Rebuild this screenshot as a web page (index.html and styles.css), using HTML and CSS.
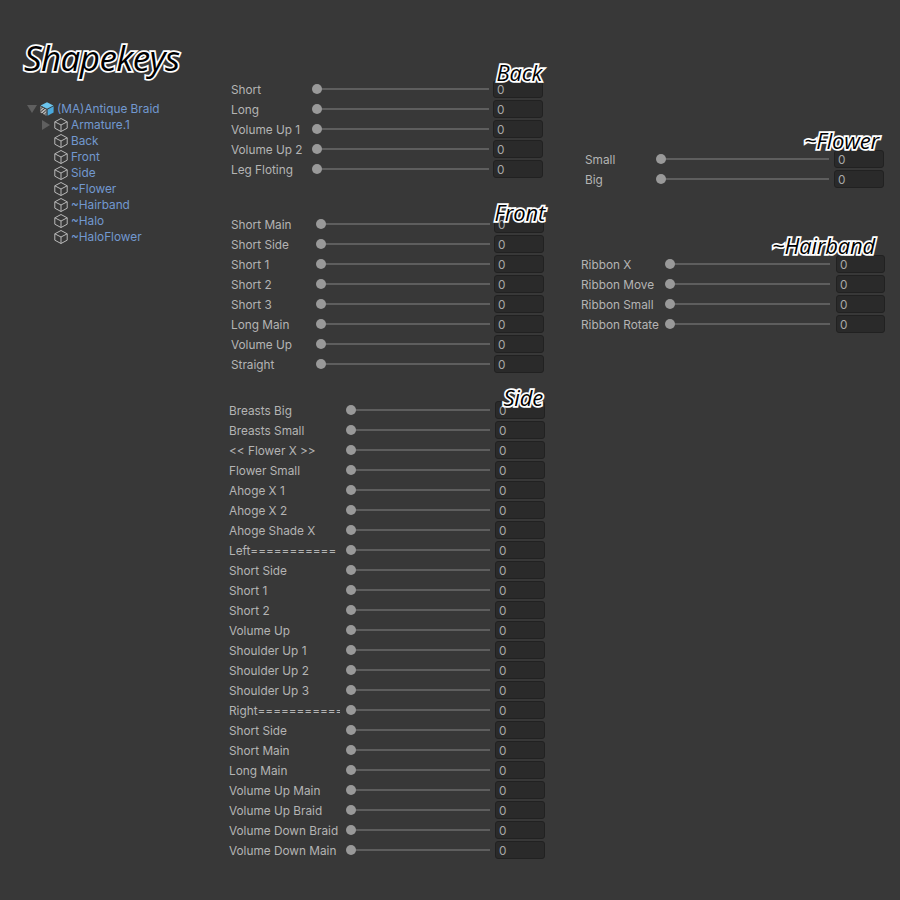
FILE: index.html
```html
<!DOCTYPE html>
<html lang="en">

<head>
    <meta charset="UTF-8">
    <title>Shapekeys</title>
    <link rel="stylesheet" href="styles.css">
</head>

<body>
<svg class="defs" width="0" height="0">
    <symbol id="cube" viewBox="0 0 16 16">
        <path d="M8 1.5 14.2 4.8V11.2L8 14.5 1.8 11.2V4.8ZM1.8 4.8 8 8 14.2 4.8M8 8V14.5" fill="none" stroke="currentColor" stroke-width="1" stroke-linejoin="round"/>
    </symbol>
</svg>
<div class="page">
    <div class="side-col">
        <div class="page-title">Shapekeys</div>
        <div class="tree">
            <div class="tree-row root">
                <span class="arrow-down"></span>
                <svg class="icon" viewBox="0 0 16 16">
                    <path d="M8 1.2 14.4 4.5 8 7.8 1.6 4.5Z" fill="#6cc5ee"/>
                    <path d="M8.6 8.6 14.6 5.3V11.5L8.6 14.8Z" fill="#4aa8dc"/>
                    <path d="M1.4 5.3 7.4 8.6V14.8L1.4 11.5Z" fill="#b4b4b4"/>
                    <path d="M1.4 8 4 5.8M1.4 11 6 7.2M3 13 7.4 9.2M5.4 14 7.4 12.2" stroke="#383838" stroke-width="1"/>
                </svg>
                <span class="tree-text">(MA)Antique Braid</span>
            </div>
            <div class="tree-row child">
                <span class="arrow-right"></span>
                <svg class="icon"><use href="#cube"/></svg>
                <span class="tree-text">Armature.1</span>
            </div>
            <div class="tree-row child"><svg class="icon"><use href="#cube"/></svg><span class="tree-text">Back</span></div>
            <div class="tree-row child"><svg class="icon"><use href="#cube"/></svg><span class="tree-text">Front</span></div>
            <div class="tree-row child"><svg class="icon"><use href="#cube"/></svg><span class="tree-text">Side</span></div>
            <div class="tree-row child"><svg class="icon"><use href="#cube"/></svg><span class="tree-text">~Flower</span></div>
            <div class="tree-row child"><svg class="icon"><use href="#cube"/></svg><span class="tree-text">~Hairband</span></div>
            <div class="tree-row child"><svg class="icon"><use href="#cube"/></svg><span class="tree-text">~Halo</span></div>
            <div class="tree-row child"><svg class="icon"><use href="#cube"/></svg><span class="tree-text">~HaloFlower</span></div>
        </div>
    </div>

    <div class="mid-col">
        <div class="section back">
            <div class="section-title">Back</div>
            <div class="row"><span class="label">Short</span><span class="slider"><i></i></span><span class="field">0</span></div>
            <div class="row"><span class="label">Long</span><span class="slider"><i></i></span><span class="field">0</span></div>
            <div class="row"><span class="label">Volume Up 1</span><span class="slider"><i></i></span><span class="field">0</span></div>
            <div class="row"><span class="label">Volume Up 2</span><span class="slider"><i></i></span><span class="field">0</span></div>
            <div class="row"><span class="label">Leg Floting</span><span class="slider"><i></i></span><span class="field">0</span></div>
        </div>

        <div class="section front">
            <div class="section-title">Front</div>
            <div class="row"><span class="label">Short Main</span><span class="slider"><i></i></span><span class="field">0</span></div>
            <div class="row"><span class="label">Short Side</span><span class="slider"><i></i></span><span class="field">0</span></div>
            <div class="row"><span class="label">Short 1</span><span class="slider"><i></i></span><span class="field">0</span></div>
            <div class="row"><span class="label">Short 2</span><span class="slider"><i></i></span><span class="field">0</span></div>
            <div class="row"><span class="label">Short 3</span><span class="slider"><i></i></span><span class="field">0</span></div>
            <div class="row"><span class="label">Long Main</span><span class="slider"><i></i></span><span class="field">0</span></div>
            <div class="row"><span class="label">Volume Up</span><span class="slider"><i></i></span><span class="field">0</span></div>
            <div class="row"><span class="label">Straight</span><span class="slider"><i></i></span><span class="field">0</span></div>
        </div>

        <div class="section sides">
            <div class="section-title">Side</div>
            <div class="row"><span class="label">Breasts Big</span><span class="slider"><i></i></span><span class="field">0</span></div>
            <div class="row"><span class="label">Breasts Small</span><span class="slider"><i></i></span><span class="field">0</span></div>
            <div class="row"><span class="label">&lt;&lt; Flower X &gt;&gt;</span><span class="slider"><i></i></span><span class="field">0</span></div>
            <div class="row"><span class="label">Flower Small</span><span class="slider"><i></i></span><span class="field">0</span></div>
            <div class="row"><span class="label">Ahoge X 1</span><span class="slider"><i></i></span><span class="field">0</span></div>
            <div class="row"><span class="label">Ahoge X 2</span><span class="slider"><i></i></span><span class="field">0</span></div>
            <div class="row"><span class="label">Ahoge Shade X</span><span class="slider"><i></i></span><span class="field">0</span></div>
            <div class="row"><span class="label">Left===========</span><span class="slider"><i></i></span><span class="field">0</span></div>
            <div class="row"><span class="label">Short Side</span><span class="slider"><i></i></span><span class="field">0</span></div>
            <div class="row"><span class="label">Short 1</span><span class="slider"><i></i></span><span class="field">0</span></div>
            <div class="row"><span class="label">Short 2</span><span class="slider"><i></i></span><span class="field">0</span></div>
            <div class="row"><span class="label">Volume Up</span><span class="slider"><i></i></span><span class="field">0</span></div>
            <div class="row"><span class="label">Shoulder Up 1</span><span class="slider"><i></i></span><span class="field">0</span></div>
            <div class="row"><span class="label">Shoulder Up 2</span><span class="slider"><i></i></span><span class="field">0</span></div>
            <div class="row"><span class="label">Shoulder Up 3</span><span class="slider"><i></i></span><span class="field">0</span></div>
            <div class="row"><span class="label">Right===========</span><span class="slider"><i></i></span><span class="field">0</span></div>
            <div class="row"><span class="label">Short Side</span><span class="slider"><i></i></span><span class="field">0</span></div>
            <div class="row"><span class="label">Short Main</span><span class="slider"><i></i></span><span class="field">0</span></div>
            <div class="row"><span class="label">Long Main</span><span class="slider"><i></i></span><span class="field">0</span></div>
            <div class="row"><span class="label">Volume Up Main</span><span class="slider"><i></i></span><span class="field">0</span></div>
            <div class="row"><span class="label">Volume Up Braid</span><span class="slider"><i></i></span><span class="field">0</span></div>
            <div class="row"><span class="label">Volume Down Braid</span><span class="slider"><i></i></span><span class="field">0</span></div>
            <div class="row"><span class="label">Volume Down Main</span><span class="slider"><i></i></span><span class="field">0</span></div>
        </div>
    </div>

    <div class="right-col">
        <div class="section flower">
            <div class="section-title">~Flower</div>
            <div class="row"><span class="label">Small</span><span class="slider"><i></i></span><span class="field">0</span></div>
            <div class="row"><span class="label">Big</span><span class="slider"><i></i></span><span class="field">0</span></div>
        </div>

        <div class="section hairband">
            <div class="section-title">~Hairband</div>
            <div class="row"><span class="label">Ribbon X</span><span class="slider"><i></i></span><span class="field">0</span></div>
            <div class="row"><span class="label">Ribbon Move</span><span class="slider"><i></i></span><span class="field">0</span></div>
            <div class="row"><span class="label">Ribbon Small</span><span class="slider"><i></i></span><span class="field">0</span></div>
            <div class="row"><span class="label">Ribbon Rotate</span><span class="slider"><i></i></span><span class="field">0</span></div>
        </div>
    </div>
</div>
</body>

</html>
```
FILE: styles.css
```css
html,
body {
    margin: 0;
    padding: 0;
    background: #383838;
}

.defs {
    display: block;
    height: 0;
}

.page {
    width: 900px;
    height: 900px;
    overflow: hidden;
    display: flex;
    font-family: "Inter", "Liberation Sans", sans-serif;
    font-size: 11.8px;
    color: #b4b4b4;
}

.side-col {
    width: 229px;
    flex: none;
    padding-top: 33px;
    box-sizing: border-box;
}

.mid-col {
    width: 352px;
    flex: none;
    padding-top: 80px;
    box-sizing: border-box;
}

.right-col {
    width: 304px;
    flex: none;
    padding-top: 150px;
    box-sizing: border-box;
}

.page-title {
    margin-left: 24px;
    height: 50px;
    line-height: 50px;
    font-family: "Open Sans", "Noto Sans", sans-serif;
    font-style: italic;
    font-size: 35px;
    letter-spacing: -0.6px;
    color: #000;
    -webkit-text-stroke: 3.5px #fff;
    paint-order: stroke fill;
    text-shadow: 0 0 2px rgba(255, 255, 255, 0.5);
}

/* tree */
.tree {
    margin-top: 18px;
    margin-left: 27px;
    color: #7298d0;
}

.tree-row {
    position: relative;
    display: flex;
    align-items: center;
    height: 16px;
    white-space: nowrap;
}

.tree-row.root {
    padding-left: 12px;
}

.tree-row.child {
    padding-left: 26px;
}

.tree-text {
    padding-bottom: 1px;
}

.icon {
    width: 16px;
    height: 16px;
    flex: none;
    margin-right: 2px;
    color: #b8b8b8;
}

.arrow-down {
    position: absolute;
    left: 0;
    top: 4px;
    border-left: 5px solid transparent;
    border-right: 5px solid transparent;
    border-top: 8px solid #5f5f5f;
}

.arrow-right {
    position: absolute;
    left: 15px;
    top: 3px;
    border-top: 5px solid transparent;
    border-bottom: 5px solid transparent;
    border-left: 8px solid #5f5f5f;
}

/* sections */
.section {
    position: relative;
}

.section-title {
    position: absolute;
    z-index: 2;
    font-family: "Open Sans", "Noto Sans", sans-serif;
    font-style: italic;
    font-size: 22px;
    line-height: 24px;
    letter-spacing: -0.2px;
    color: #000;
    -webkit-text-stroke: 3.5px #fff;
    paint-order: stroke fill;
    text-shadow: 0 0 2px rgba(255, 255, 255, 0.5);
}

.row {
    display: grid;
    height: 20px;
}

.label {
    overflow: hidden;
    white-space: nowrap;
    line-height: 20px;
}

.slider {
    position: relative;
    display: block;
    height: 10px;
    margin-top: 4px;
}

.slider::before {
    content: "";
    position: absolute;
    left: 5px;
    right: 0;
    top: 4px;
    height: 2px;
    background: #5e5e5e;
}

.slider i {
    position: absolute;
    left: 0;
    top: 0;
    width: 10px;
    height: 10px;
    border-radius: 50%;
    background: #999;
}

.field {
    grid-column: 4;
    box-sizing: border-box;
    height: 18px;
    line-height: 18px;
    padding-left: 3px;
    background: #2a2a2a;
    border: 1px solid #212121;
    border-radius: 3px;
    color: #a8a8a8;
}

.back {
    margin-left: 2px;
    width: 312px;
}

.back .row {
    grid-template-columns: 81px 177px 4px 50px;
}

.back .section-title {
    right: 1px;
    top: -20px;
}

.front {
    margin-top: 35px;
    margin-left: 2px;
    width: 313px;
}

.front .row {
    grid-template-columns: 85px 174px 4px 50px;
}

.front .section-title {
    right: -1px;
    top: -15px;
}

.sides {
    margin-top: 26px;
    width: 316px;
}

.sides .row {
    grid-template-columns: 117px 144px 5px 50px;
}

.sides .label {
    margin-right: 6px;
}

.sides .section-title {
    right: 2px;
    top: -16px;
}

.flower {
    margin-left: 4px;
    width: 299px;
}

.flower .row {
    grid-template-columns: 71px 173px 5px 50px;
}

.flower .section-title {
    right: 5px;
    top: -22px;
}

.hairband {
    margin-top: 65px;
    width: 304px;
}

.hairband .row {
    grid-template-columns: 84px 165px 6px 49px;
}

.hairband .section-title {
    right: 10px;
    top: -22px;
}
```
